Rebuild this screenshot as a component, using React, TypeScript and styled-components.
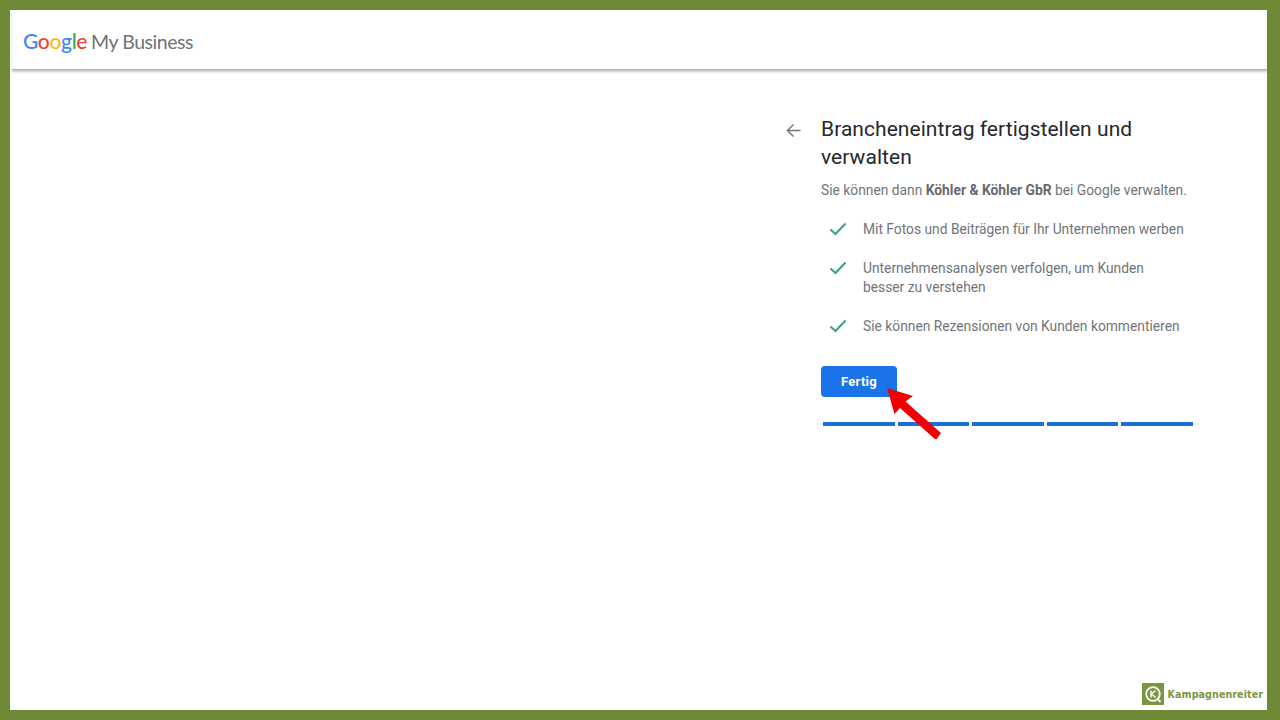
import React from "react";
import styled, { createGlobalStyle } from "styled-components";

const Global = createGlobalStyle`
  html, body { margin: 0; padding: 0; height: 100%; }
  body { font-family: Roboto, "Liberation Sans", sans-serif; }
`;

const Frame = styled.div`
  position: relative;
  box-sizing: border-box;
  width: 1280px;
  height: 720px;
  padding: 10px 13px 10px 10px;
  background: #6f8a36;
  overflow: hidden;
`;

const Sheet = styled.div`
  position: relative;
  height: 100%;
  background: #fff;
  display: flex;
  flex-direction: column;
`;

const Header = styled.header`
  box-sizing: border-box;
  height: 60px;
  margin-left: 2px;
  padding-left: 11px;
  display: flex;
  align-items: center;
  border-bottom: 1px solid #b4b4b4;
  box-shadow: 0 2px 2px rgba(0, 0, 0, 0.22);
`;

const Brand = styled.div`
  font-family: Lato, "Open Sans", sans-serif;
  display: flex;
  align-items: baseline;
  gap: 4px;
  margin-top: 2px;
  color: #6f7276;
`;

const Letter = styled.span<{ $c: string }>`
  color: ${(p) => p.$c};
`;

const GoogleWord = styled.span`
  font-size: 21px;
  font-weight: 500;
  letter-spacing: -0.35px;
`;

const ProductWord = styled.span`
  font-size: 19.5px;
  letter-spacing: -0.45px;
`;

const Main = styled.main`
  flex: 1;
  display: flex;
  justify-content: flex-end;
  padding: 45px 72px 0 0;
`;

const Panel = styled.section`
  width: 409px;
  display: flex;
  gap: 18px;
`;

const Back = styled.div`
  width: 17px;
  height: 16px;
  margin-top: 8px;
  color: #70757a;
  flex: none;
`;

const Body = styled.div`
  width: 374px;
`;

const Title = styled.h1`
  margin: 0;
  font-family: Roboto, sans-serif;
  font-weight: 400;
  font-size: 21px;
  line-height: 28px;
  letter-spacing: 0.05px;
  color: #25282b;
`;

const Lead = styled.p`
  margin: 9px 0 0;
  font-size: 13.8px;
  line-height: 20px;
  color: #70757a;
  white-space: nowrap;

  b {
    font-weight: 700;
    color: #666a6e;
  }
`;

const List = styled.ul`
  list-style: none;
  margin: 20px 0 0;
  padding: 0;
  display: flex;
  flex-direction: column;
  gap: 20.5px;
`;

const Item = styled.li`
  display: flex;
  align-items: flex-start;
  gap: 16px;
  padding-left: 8px;
  font-size: 13.8px;
  line-height: 18.5px;
  color: #70757a;
`;

const Check = styled.div`
  width: 18px;
  height: 18px;
  flex: none;
  color: #3aa37c;
`;

const ItemText = styled.span`
  width: 325px;
`;

const Button = styled.button`
  display: block;
  margin-top: 31px;
  width: 76px;
  height: 31px;
  border: 0;
  border-radius: 4px;
  background: #1a73e8;
  color: #fff;
  font-family: Roboto, sans-serif;
  font-size: 13px;
  font-weight: 700;
  letter-spacing: 0.3px;
`;

const Progress = styled.div`
  display: flex;
  gap: 3px;
  margin: 25px 0 0 2px;
  width: 370px;
`;

const Step = styled.div`
  flex: 1;
  height: 4px;
  background: #1b6fdb;
`;

const Pointer = styled.svg`
  position: absolute;
  left: 867px;
  top: 369px;
  width: 66px;
  height: 60px;
`;

const Badge = styled.div`
  position: absolute;
  right: 4px;
  bottom: 5px;
  display: flex;
  align-items: center;
  gap: 4px;
`;

const BadgeMark = styled.svg`
  width: 22px;
  height: 22px;
`;

const BadgeName = styled.span`
  font-family: "DejaVu Sans", sans-serif;
  font-size: 9.6px;
  font-weight: 700;
  color: #7b9640;
  letter-spacing: 0.05px;
`;

const items = [
  "Mit Fotos und Beiträgen für Ihr Unternehmen werben",
  <>
    Unternehmensanalysen verfolgen, um Kunden
    <br />
    besser zu verstehen
  </>,
  "Sie können Rezensionen von Kunden kommentieren",
];

export default function App() {
  return (
    <>
      <Global />
      <Frame>
        <Sheet>
          <Header>
            <Brand>
              <GoogleWord>
                <Letter $c="#4285f4">G</Letter>
                <Letter $c="#ea4335">o</Letter>
                <Letter $c="#fbbc05">o</Letter>
                <Letter $c="#4285f4">g</Letter>
                <Letter $c="#34a853">l</Letter>
                <Letter $c="#ea4335">e</Letter>
              </GoogleWord>
              <ProductWord>My Business</ProductWord>
            </Brand>
          </Header>
          <Main>
            <Panel>
              <Back>
                <svg viewBox="0 0 16 16" width="15" height="15" fill="none" stroke="currentColor" strokeWidth="1.5">
                  <path d="M15.5 8H1.5M8 1.5 1.5 8 8 14.5" />
                </svg>
              </Back>
              <Body>
                <Title>
                  Brancheneintrag fertigstellen und
                  <br />
                  verwalten
                </Title>
                <Lead>
                  Sie können dann <b>Köhler &amp; Köhler GbR</b> bei Google verwalten.
                </Lead>
                <List>
                  {items.map((t, i) => (
                    <Item key={i}>
                      <Check>
                        <svg viewBox="0 0 18 18" width="18" height="18" fill="none" stroke="currentColor" strokeWidth="2">
                          <path d="M1.5 9.5 6.5 14 16.5 3.5" />
                        </svg>
                      </Check>
                      <ItemText>{t}</ItemText>
                    </Item>
                  ))}
                </List>
                <Button>Fertig</Button>
                <Progress>
                  {[0, 1, 2, 3, 4].map((i) => (
                    <Step key={i} />
                  ))}
                </Progress>
              </Body>
            </Panel>
          </Main>
          <Pointer viewBox="0 0 66 60">
            <path d="M10 9 36 17 28.5 22.5 64 54 59 61 23 29 17.5 35Z" fill="#f00000" />
          </Pointer>
          <Badge>
            <BadgeMark viewBox="0 0 22 22">
              <rect width="22" height="22" fill="#7b9640" />
              <circle cx="11" cy="11" r="6.8" fill="none" stroke="#fff" strokeWidth="1.8" />
              <path d="M9 7.5v7M13.5 7.5 9.5 11l4 3.5" fill="none" stroke="#fff" strokeWidth="1.4" />
              <path d="M15 15.5l3.5 3.5" stroke="#fff" strokeWidth="1.8" />
            </BadgeMark>
            <BadgeName>Kampagnenreiter</BadgeName>
          </Badge>
        </Sheet>
      </Frame>
    </>
  );
}
